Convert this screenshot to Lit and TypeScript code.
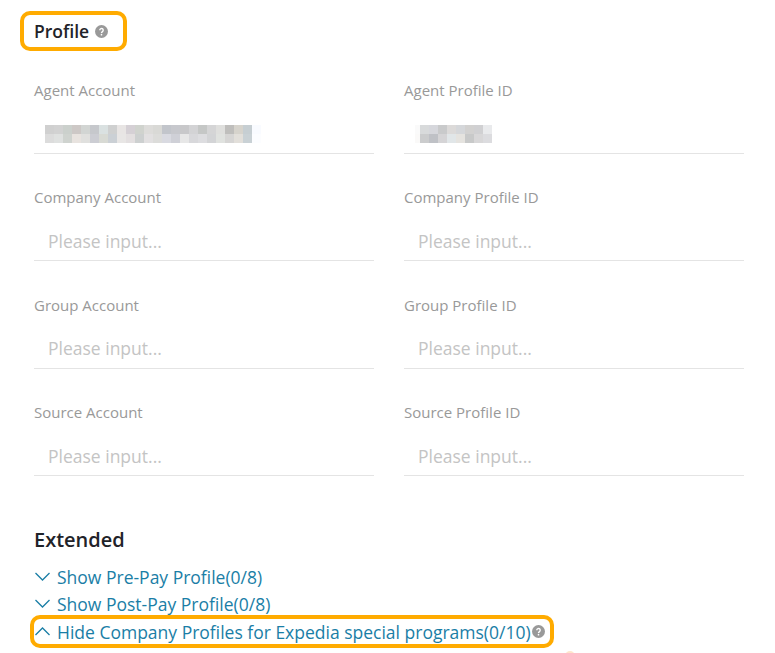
import { LitElement, css, html } from 'lit'
import { customElement } from 'lit/decorators.js'

// mosaic cells of the blurred values, two rows of 9px squares
const AGENT_ACCOUNT = [
  ['d0d0d0', 'd2d2d2', 'cbd0cc', 'cdc8c6', 'd2d5d3', 'c6c8cc', 'dae1e1', 'cfd0d0', 'e8e5e4', 'd5d0d5', 'd0d3ce', 'dddcda', 'd9d9d6', 'c2c5cb', 'c7c8cd', 'c8c8ca', 'd3d3d5', 'c5c7c6', 'd5d5d6', 'dfdfdd', 'bfbebc', 'd6d3cc', 'c6ced2', 'f9fbff'],
  ['dcdcdc', 'dfe1e0', 'cfd3cf', 'e8e3df', 'e0e0de', 'cccdd3', 'd8dad4', 'cbd0d5', 'e8e6e5', 'e3dfe0', 'cdd0d0', 'e2e0e1', 'dcdcda', 'd9dae1', 'cfd0d7', 'e7e7e7', 'd8d8db', 'dddde0', 'd3d4d6', 'e0e2df', 'd6d5d4', 'e2dfda', 'c9d1d5', 'fcfdff'],
]
const AGENT_PROFILE = [
  ['fafafa', 'd8dadb', 'd6d7dc', 'c9cacb', 'dcdad9', 'd5d7da', 'd2d1d0', 'd0d0d2', 'e9eaec'],
  ['faf9f8', 'cbcccd', 'bfc1c6', 'd5d4d6', 'e1e6e8', 'e5e3df', 'c8c9c9', 'd8d7d8', 'dcdcdf'],
]

const FIELDS = [
  { label: 'Agent Account', mosaic: AGENT_ACCOUNT },
  { label: 'Agent Profile ID', mosaic: AGENT_PROFILE, narrow: true },
  { label: 'Company Account' },
  { label: 'Company Profile ID' },
  { label: 'Group Account' },
  { label: 'Group Profile ID' },
  { label: 'Source Account' },
  { label: 'Source Profile ID' },
]

@customElement('app-root')
export class AppRoot extends LitElement {
  static styles = css`
    :host {
      display: block;
      position: relative;
      height: 653px;
      overflow: hidden;
      background: #ffffff;
      font-family: 'Open Sans', 'Noto Sans', sans-serif;
      padding: 11px 31px 0 20px;
      box-sizing: border-box;
    }

    .title {
      display: inline-flex;
      align-items: center;
      gap: 6px;
      width: 107px;
      height: 40px;
      box-sizing: border-box;
      padding-left: 10px;
      border: 4px solid #ffab00;
      border-radius: 10px;
      font-size: 17.5px;
      font-weight: 600;
      color: #1f2329;
    }

    .help {
      flex: none;
      display: block;
    }

    .grid {
      display: grid;
      grid-template-columns: 340px 340px;
      column-gap: 30px;
      row-gap: 33.4px;
      margin: 29px 0 0 14px;
    }

    .label {
      height: 20px;
      line-height: 20px;
      font-size: 15px;
      color: #999999;
    }

    .input {
      display: flex;
      align-items: center;
      height: 35px;
      margin-top: 16px;
      padding: 0 0 2px 14px;
      border-bottom: 1px solid #e4e4e4;
      font-size: 17.5px;
      color: #c4c4c4;
    }

    .input.masked {
      padding-left: 11px;
    }

    .mosaic {
      display: grid;
      grid-auto-flow: column;
      grid-template-rows: 9px 9px;
      grid-auto-columns: 9px;
    }

    .mosaic.narrow {
      grid-template-columns: 5px;
    }

    .extended {
      margin: 52px 0 0 14px;
      height: 24px;
      line-height: 24px;
      font-size: 20px;
      font-weight: 600;
      color: #1f2329;
    }

    .links {
      margin-top: 11px;
    }

    .link {
      display: flex;
      align-items: center;
      gap: 7px;
      height: 27px;
      margin-left: 15px;
      font-size: 17.5px;
      color: #1a7ea6;
      white-space: nowrap;
    }

    .link.open {
      width: 524px;
      height: 33px;
      box-sizing: border-box;
      margin: -2px 0 0 10px;
      padding-left: 1px;
      border: 4px solid #ffab00;
      border-radius: 10px;
    }

    .link .help {
      margin-left: -6px;
    }

    .chevron {
      flex: none;
      display: block;
    }

    /* edge of the next annotation, cut off by the bottom of the shot */
    .cut {
      position: absolute;
      left: 565px;
      top: 651px;
      width: 10px;
      height: 10px;
      border-radius: 50%;
      background: #ffe6cc;
    }
  `

  private help(size: number) {
    return html`
      <svg class="help" width=${size} height=${size} viewBox="0 0 14 14">
        <circle cx="7" cy="7" r="7" fill="#999999"></circle>
        <path d="M5.2 5.6a1.8 1.8 0 1 1 2.8 1.5c-.6.4-1 .7-1 1.4" fill="none" stroke="#ffffff" stroke-width="1.5"></path>
        <circle cx="7" cy="10.4" r="0.9" fill="#ffffff"></circle>
      </svg>
    `
  }

  private chevron(up: boolean) {
    return html`
      <svg class="chevron" width="15" height="9" viewBox="0 0 15 9">
        <path d=${up ? 'M.5 8L7.5 1l7 7' : 'M.5 1l7 7 7-7'} fill="none" stroke="#1a7ea6" stroke-width="1.3"></path>
      </svg>
    `
  }

  private field(f: { label: string; mosaic?: string[][]; narrow?: boolean }) {
    if (!f.mosaic) {
      return html`
        <div>
          <div class="label">${f.label}</div>
          <div class="input">Please input...</div>
        </div>
      `
    }
    return html`
      <div>
        <div class="label">${f.label}</div>
        <div class="input masked">
          <div class="mosaic ${f.narrow ? 'narrow' : ''}">
            ${f.mosaic[0].map((_, i) => f.mosaic!.map(row => html`<span style="background:#${row[i]}"></span>`))}
          </div>
        </div>
      </div>
    `
  }

  render() {
    return html`
      <div class="title">Profile ${this.help(13)}</div>
      <div class="grid">${FIELDS.map(f => this.field(f))}</div>
      <div class="extended">Extended</div>
      <div class="links">
        <div class="link">${this.chevron(false)}Show Pre-Pay Profile(0/8)</div>
        <div class="link">${this.chevron(false)}Show Post-Pay Profile(0/8)</div>
        <div class="link open">
          ${this.chevron(true)}Hide Company Profiles for Expedia special programs(0/10)${this.help(13)}
        </div>
      </div>
      <div class="cut"></div>
    `
  }
}
